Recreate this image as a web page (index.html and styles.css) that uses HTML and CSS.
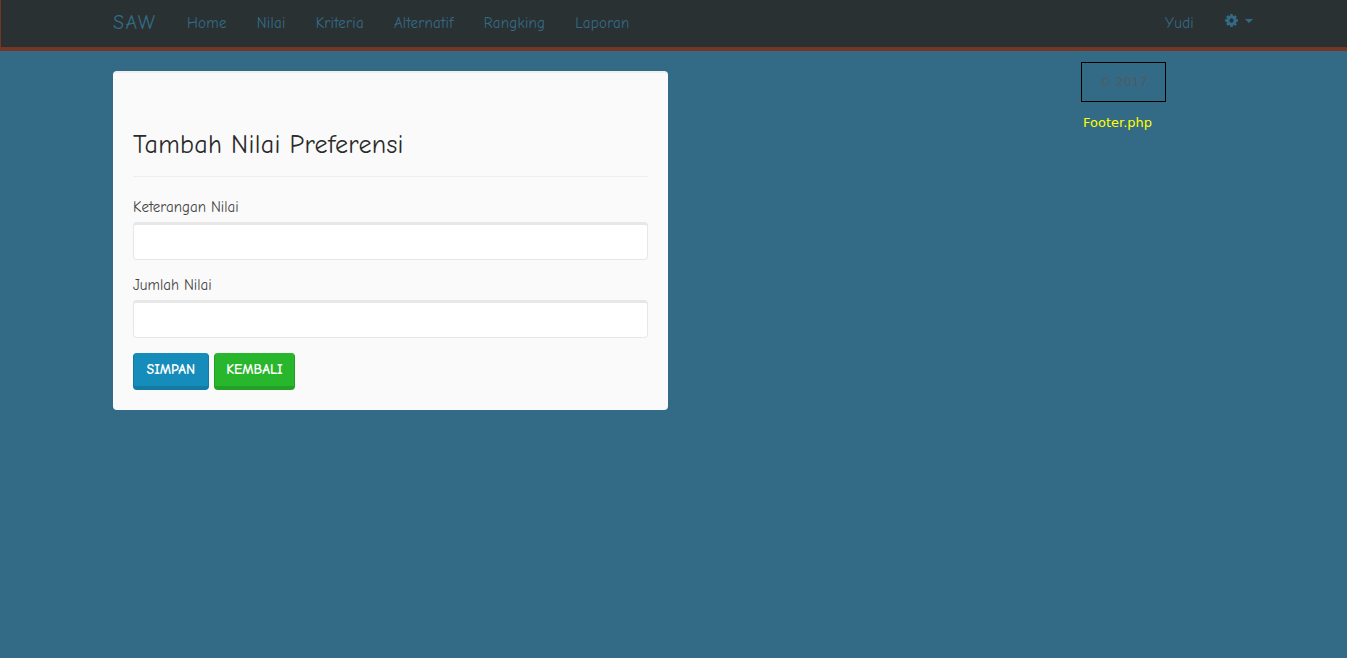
FILE: index.html
```html
<!DOCTYPE html>
<html lang="en">
  <head>
    <meta charset="UTF-8" />
    <title>Tambah Nilai Preferensi</title>
    <link rel="stylesheet" href="styles.css">
  </head>
  <body>
    <nav class="navbar">
      <a class="brand" href="#">SAW</a>
      <ul class="nav-links">
        <li><a href="#">Home</a></li>
        <li><a href="#">Nilai</a></li>
        <li><a href="#">Kriteria</a></li>
        <li><a href="#">Alternatif</a></li>
        <li><a href="#">Rangking</a></li>
        <li><a href="#">Laporan</a></li>
      </ul>
      <ul class="nav-links nav-right">
        <li><a href="#">Yudi</a></li>
        <li>
          <a href="#" class="settings">
            <svg class="gear" viewBox="0 0 1792 1792" width="15" height="15" xmlns="http://www.w3.org/2000/svg">
              <path d="M1152 896q0-106-75-181t-181-75-181 75-75 181 75 181 181 75 181-75 75-181zm512-109v222q0 12-8 23t-20 13l-185 28q-19 54-39 91 35 50 107 138 10 12 10 25t-9 23q-27 37-99 108t-94 71q-12 0-26-9l-138-108q-44 23-91 38-16 136-29 186-7 28-36 28h-222q-14 0-24.5-8.5t-11.5-21.5l-28-184q-49-16-90-37l-141 107q-10 9-25 9-14 0-25-11-126-114-165-168-7-10-7-23 0-12 8-23 15-21 51-66.5t54-70.5q-27-50-41-99l-183-27q-13-2-21-12.5t-8-23.5v-222q0-12 8-23t19-13l186-28q14-46 39-92-40-57-107-138-10-12-10-24 0-10 9-23 26-36 98.5-107.5t94.5-71.5q13 0 26 10l138 107q44-23 91-38 16-136 29-186 7-28 36-28h222q14 0 24.5 8.5t11.5 21.5l28 184q49 16 90 37l142-107q9-9 24-9 13 0 25 10 129 119 165 170 7 8 7 22 0 12-8 23-15 21-51 66.5t-54 70.5q26 50 41 98l183 28q13 2 21 12.5t8 23.5z"></path>
            </svg>
            <span class="caret"></span>
          </a>
        </li>
      </ul>
    </nav>
    <div class="page">
      <div class="panel">
        <h3 class="panel-title">Tambah Nilai Preferensi</h3>
        <form>
          <div class="form-group">
            <label for="keterangan">Keterangan Nilai</label>
            <input type="text" id="keterangan" class="input" />
          </div>
          <div class="form-group">
            <label for="jumlah">Jumlah Nilai</label>
            <input type="text" id="jumlah" class="input" />
          </div>
          <div class="actions">
            <button type="button" class="btn btn-primary">Simpan</button>
            <button type="button" class="btn btn-success">Kembali</button>
          </div>
        </form>
      </div>
      <div class="side">
        <div class="copyright">© 2017</div>
        <p class="footer-note">Footer.php</p>
      </div>
    </div>
  </body>
</html>
```

FILE: styles.css
```css
html,
body {
  margin: 0;
  min-height: 658px;
  background: #336b87;
  font-family: "Comic Sans MS", "Comic Neue", cursive;
  font-size: 14px;
  overflow: hidden;
}
a {
  color: #336b87;
  text-decoration: none;
}
ul {
  list-style: none;
  margin: 0;
  padding: 0;
}

/* navbar */
.navbar {
  display: flex;
  align-items: center;
  height: 47px;
  padding: 0 79px 2px 112px;
  box-sizing: content-box;
  height: 45px;
  background: #2a3132;
  border: 1px solid #763626;
  border-width: 0 0 4px 1px;
}
.brand {
  width: 45px;
  margin-right: 14px;
  font-size: 20px;
  letter-spacing: 1.5px;
  line-height: 20px;
}
.nav-links {
  display: flex;
}
.nav-links a {
  display: flex;
  align-items: center;
  padding: 0 15px;
  font-size: 15px;
  letter-spacing: 0.25px;
  line-height: 20px;
}
.nav-right {
  margin-left: auto;
}
.gear {
  fill: #336b87;
}
.caret {
  width: 0;
  height: 0;
  margin-left: 6px;
  margin-top: 2px;
  border-top: 4px solid #336b87;
  border-left: 4px solid transparent;
  border-right: 4px solid transparent;
}

/* page */
.page {
  display: flex;
  align-items: flex-start;
  padding-left: 113px;
}
.panel {
  width: 555px;
  box-sizing: border-box;
  margin-top: 20px;
  padding: 0 20px 20px;
  background: #fafafa;
  border-top: 2px solid #f0f0f0;
  border-radius: 4px;
}
.panel-title {
  margin: 58px 0 0;
  padding-bottom: 17px;
  border-bottom: 1px solid #eeeeee;
  color: #2a2a2a;
  font-size: 26px;
  font-weight: 400;
  letter-spacing: 0.3px;
  line-height: 28px;
}
.form-group {
  margin-top: 20px;
}
.form-group + .form-group {
  margin-top: 15px;
}
label {
  display: block;
  margin-bottom: 5px;
  color: #444444;
  font-size: 15px;
  line-height: 20px;
}
.input {
  display: block;
  width: 100%;
  height: 38px;
  box-sizing: border-box;
  background: #fff;
  border: 1px solid #e7e7e7;
  border-top-width: 3px;
  border-radius: 4px;
  outline: none;
}
.actions {
  display: flex;
  gap: 5px;
  margin-top: 15px;
}
.btn {
  height: 37px;
  border: 1px solid;
  border-width: 0 1px 4px;
  border-radius: 4px;
  color: #fff;
  font-family: inherit;
  font-size: 14px;
  font-weight: 700;
  text-transform: uppercase;
}
.btn-primary {
  padding: 0 12.5px;
  background: #158cba;
  border-color: #127ba3;
}
.btn-success {
  padding: 0 11.5px;
  background: #28b62c;
  border-color: #23a127;
}

/* footer bits on the right */
.side {
  margin-left: 413px;
  margin-top: 11px;
}
.copyright {
  width: 85px;
  height: 40px;
  box-sizing: border-box;
  border: 1px solid #000;
  color: #505a60;
  font-family: "DejaVu Sans", sans-serif;
  font-size: 12.5px;
  line-height: 38px;
  text-align: center;
}
.footer-note {
  margin: 12px 0 0 2px;
  color: #ffff00;
  font-family: "DejaVu Sans", sans-serif;
  font-size: 13px;
  line-height: 17px;
}
```
